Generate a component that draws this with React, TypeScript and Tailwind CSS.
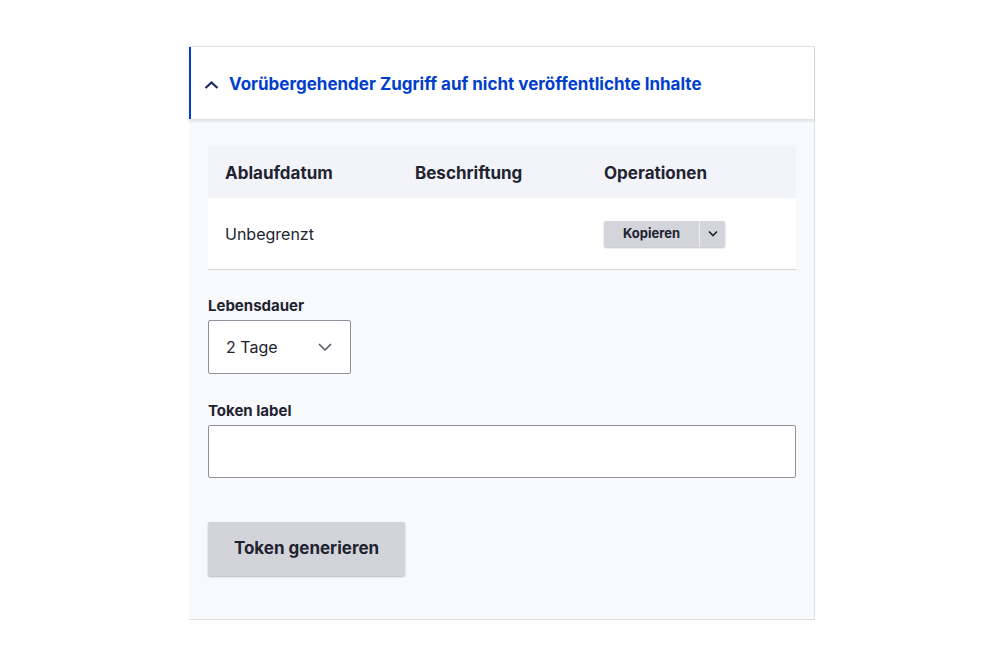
import React from "react";

export default function App() {
  return (
    <div className="w-[999px] h-[666px] bg-white relative" style={{ fontFamily: "Inter, 'Liberation Sans', sans-serif" }}>
      <div className="absolute left-[189px] top-[46px] w-[626px] border border-[#dedfe4] border-l-0 bg-[#f8f9fb]">
        <div className="h-[72px] bg-white border-l-[2px] border-[#003ecc] flex items-center pl-[13px] pt-[3px] gap-[10px] shadow-[0_2px_3px_rgba(0,0,0,0.12)] relative">
          <svg width="15" height="10" viewBox="0 0 15 10" fill="none">
            <path d="M1.5 8 L7.5 2.5 L13.5 8" stroke="#1b2a5c" strokeWidth="2.2" />
          </svg>
          <span className="text-[17px] font-bold text-[#003ecc]">Vorübergehender Zugriff auf nicht veröffentlichte Inhalte</span>
        </div>
        <div className="px-[19px] pt-[27px] pb-[43px]">
          <div className="w-[588px]">
            <div className="h-[52px] pt-[3px] bg-[#f3f4f9] grid grid-cols-[190px_189px_1fr] items-center text-[17px] font-bold text-[#222330]">
              <div className="pl-[17px]">Ablaufdatum</div>
              <div className="pl-[17px]">Beschriftung</div>
              <div className="pl-[17px]">Operationen</div>
            </div>
            <div className="h-[72px] bg-white border-b border-[#d4d4d8] grid grid-cols-[190px_189px_1fr] items-center text-[16px] text-[#222330]">
              <div className="pl-[17px]">Unbegrenzt</div>
              <div></div>
              <div className="pl-[17px]">
                <div className="inline-flex h-[26px] bg-[#d4d5db] rounded-[2px] shadow-[0_1px_2px_rgba(0,0,0,0.25)]">
                  <div className="w-[95px] flex items-center justify-center text-[13px] font-bold text-[#222330]">Kopieren</div>
                  <div className="w-[1px] bg-[#eeeef0]"></div>
                  <div className="w-[25px] flex items-center justify-center">
                    <svg width="10" height="7" viewBox="0 0 10 7" fill="none">
                      <path d="M1 1.5 L5 5.5 L9 1.5" stroke="#222330" strokeWidth="1.6" />
                    </svg>
                  </div>
                </div>
              </div>
            </div>
          </div>
          <div className="mt-[27px] text-[15px] font-bold text-[#222330] leading-[18px]">Lebensdauer</div>
          <div className="mt-[5px] w-[143px] h-[54px] bg-white border border-[#8e929c] rounded-[2px] flex items-center justify-between pl-[17px] pr-[18px] text-[16px] text-[#222330]">
            <span>2 Tage</span>
            <svg width="14" height="8" viewBox="0 0 14 8" fill="none">
              <path d="M1 1 L7 7 L13 1" stroke="#545560" strokeWidth="1.5" />
            </svg>
          </div>
          <div className="mt-[28px] text-[15px] font-bold text-[#222330] leading-[18px]">Token label</div>
          <div className="mt-[5px] w-[588px] h-[53px] bg-white border border-[#8e929c] rounded-[2px]"></div>
          <div className="mt-[44px] w-[197px] h-[54px] bg-[#d3d4d9] rounded-[2px] shadow-[0_1px_2px_rgba(0,0,0,0.25)] flex items-center justify-center text-[17px] font-bold text-[#222330]">Token generieren</div>
        </div>
      </div>
    </div>
  );
}
